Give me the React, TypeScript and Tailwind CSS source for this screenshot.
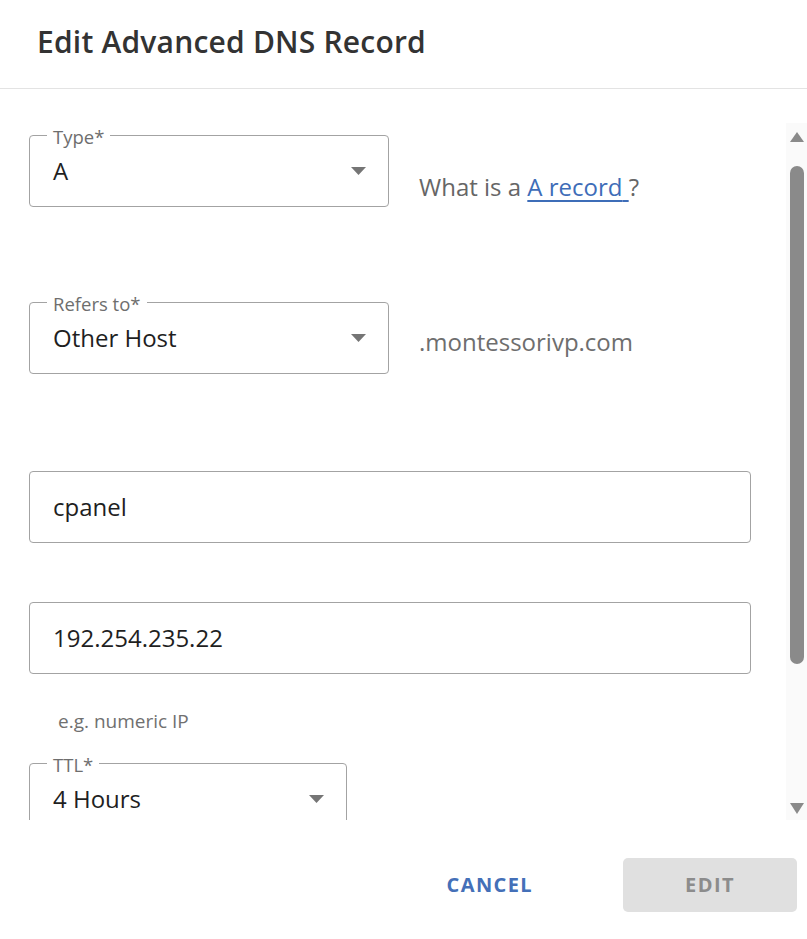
import React from "react";

function Caret() {
  return (
    <svg width="15" height="8" viewBox="0 0 15 8" className="shrink-0">
      <path d="M0 0 L15 0 L7.5 8 Z" fill="#757575" />
    </svg>
  );
}

function Field({
  label,
  value,
  select,
  width,
}: {
  label?: string;
  value: string;
  select?: boolean;
  width: string;
}) {
  return (
    <div
      className={`relative h-[72px] ${width} shrink-0 rounded-[4px] border border-[#a3a3a3] flex items-center pl-[23px] pr-[22px]`}
    >
      {label && (
        <span className="absolute left-[17px] top-[-10px] bg-white px-[6px] text-[18.5px] leading-[22px] text-[#6e6e6e]">
          {label}
        </span>
      )}
      <span className="flex-1 text-[24px] leading-[32px] text-[#1f1f1f]">{value}</span>
      {select && <Caret />}
    </div>
  );
}

export default function App() {
  return (
    <div
      className="w-[807px] h-[939px] bg-white flex flex-col overflow-hidden"
      style={{ fontFamily: '"Open Sans", "Noto Sans", sans-serif' }}
    >
      <div className="h-[89px] shrink-0 border-b border-[#e3e3e3] flex items-center pl-[37px] pb-[6px]">
        <h1 className="text-[30px] font-semibold text-[#333333] tracking-[0.2px]">
          Edit Advanced DNS Record
        </h1>
      </div>
      <div className="h-[34px] shrink-0" />
      <div className="h-[697px] shrink-0 flex">
        <div className="flex-1 overflow-hidden pl-[29px] pt-[12px] flex flex-col">
          <div className="flex items-start">
            <Field label="Type*" value="A" select width="w-[360px]" />
            <div className="ml-[30px] mt-[36px] text-[24px] leading-[32px] text-[#666666] whitespace-pre">
              What is a{" "}
              <a className="text-[#3e6db8] underline underline-offset-[4px] decoration-[2px]">
                A record{" "}
              </a>
              ?
            </div>
          </div>
          <div className="flex items-start mt-[95px]">
            <Field label="Refers to*" value="Other Host" select width="w-[360px]" />
            <div className="ml-[30px] mt-[24px] text-[24px] leading-[32px] text-[#6e6e6e]">
              .montessorivp.com
            </div>
          </div>
          <div className="mt-[97px]">
            <Field value="cpanel" width="w-[722px]" />
          </div>
          <div className="mt-[59px]">
            <Field value="192.254.235.22" width="w-[722px]" />
          </div>
          <div className="mt-[34px] pl-[29px] text-[19px] leading-[26px] text-[#707070]">
            e.g. numeric IP
          </div>
          <div className="mt-[29px]">
            <Field label="TTL*" value="4 Hours" select width="w-[318px]" />
          </div>
        </div>
        <div className="w-[21px] shrink-0 bg-[#fafafa] flex flex-col items-center pt-[9px] pb-[6px]">
          <svg width="14" height="10" viewBox="0 0 14 10">
            <path d="M7 0 L14 10 L0 10 Z" fill="#8a8a8a" />
          </svg>
          <div className="mt-[24px] w-[14px] h-[498px] rounded-full bg-[#8a8a8a]" />
          <div className="flex-1" />
          <svg width="14" height="11" viewBox="0 0 14 11">
            <path d="M0 0 L14 0 L7 11 Z" fill="#8a8a8a" />
          </svg>
        </div>
      </div>
      <div className="flex-1 flex items-center justify-end pr-[10px] pt-[10px]">
        <button className="text-[20px] font-bold tracking-[1.4px] text-[#4470b8] mr-[90px]">
          CANCEL
        </button>
        <button className="w-[174px] h-[54px] rounded-[5px] bg-[#e0e0e0] text-[20px] font-bold tracking-[1.4px] text-[#8c8c8c]">
          EDIT
        </button>
      </div>
    </div>
  );
}
